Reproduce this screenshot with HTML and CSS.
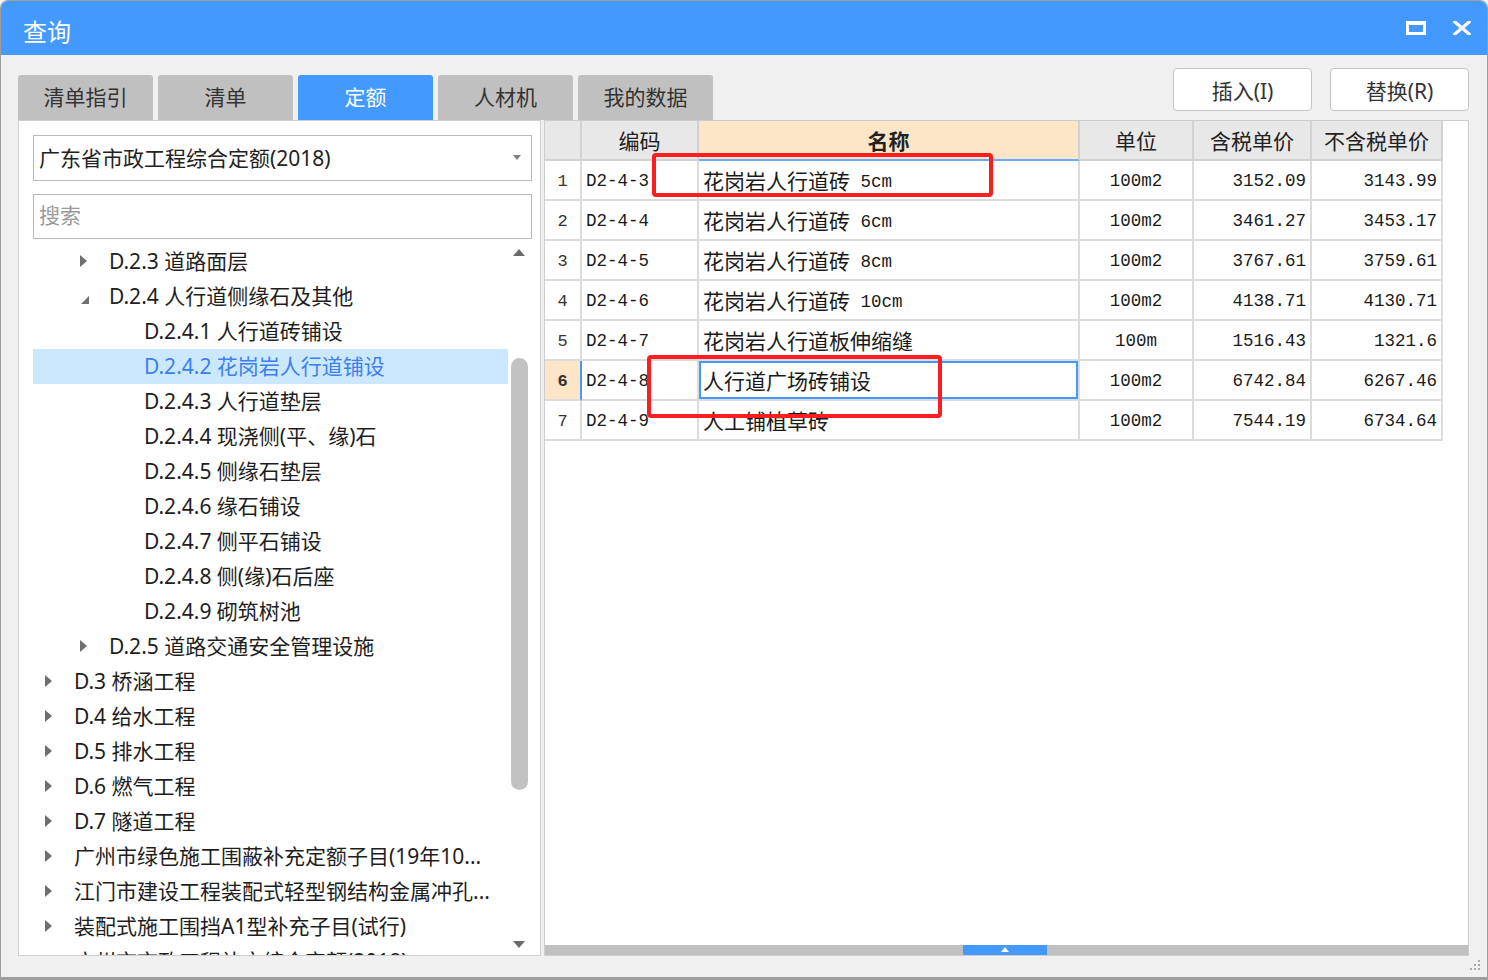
FILE: index.html
```html
<!DOCTYPE html>
<html lang="zh-CN">
<head>
<meta charset="utf-8">
<title>查询</title>
<link rel="stylesheet" href="styles.css">
</head>
<body>
<div class="window">
  <header class="titlebar">
    <span class="title">查询</span>
    <div class="winctrls">
      <svg class="ic" width="20" height="14" viewBox="0 0 20 14"><rect x="1.5" y="2" width="17" height="10.5" fill="none" stroke="#fff" stroke-width="3"/><rect x="0" y="0" width="20" height="4" fill="#fff"/></svg>
      <svg class="ic" width="18" height="14" viewBox="0 0 18 14"><path d="M2 1 L16 13 M16 1 L2 13" stroke="#fff" stroke-width="3.2" stroke-linecap="square" fill="none"/></svg>
    </div>
  </header>
  <main class="content">
    <div class="toprow">
      <nav class="tabs">
        <div class="tab">清单指引</div>
        <div class="tab">清单</div>
        <div class="tab active">定额</div>
        <div class="tab">人材机</div>
        <div class="tab">我的数据</div>
      </nav>
      <div class="actions">
        <button class="btn">插入(I)</button>
        <button class="btn">替换(R)</button>
      </div>
    </div>
    <div class="panes">
      <section class="left">
        <div class="select"><span>广东省市政工程综合定额(2018)</span><i class="caret"></i></div>
        <div class="search">搜索</div>
        <div class="treewrap">
          <ul class="tree">
            <li class="node l2"><span class="arr closed"></span><span>D.2.3 道路面层</span></li>
            <li class="node l2"><span class="arr open"></span><span>D.2.4 人行道侧缘石及其他</span></li>
            <li class="node l3"><span class="arr"></span><span>D.2.4.1 人行道砖铺设</span></li>
            <li class="node l3 sel"><span class="arr"></span><span>D.2.4.2 花岗岩人行道铺设</span></li>
            <li class="node l3"><span class="arr"></span><span>D.2.4.3 人行道垫层</span></li>
            <li class="node l3"><span class="arr"></span><span>D.2.4.4 现浇侧(平、缘)石</span></li>
            <li class="node l3"><span class="arr"></span><span>D.2.4.5 侧缘石垫层</span></li>
            <li class="node l3"><span class="arr"></span><span>D.2.4.6 缘石铺设</span></li>
            <li class="node l3"><span class="arr"></span><span>D.2.4.7 侧平石铺设</span></li>
            <li class="node l3"><span class="arr"></span><span>D.2.4.8 侧(缘)石后座</span></li>
            <li class="node l3"><span class="arr"></span><span>D.2.4.9 砌筑树池</span></li>
            <li class="node l2"><span class="arr closed"></span><span>D.2.5 道路交通安全管理设施</span></li>
            <li class="node l1"><span class="arr closed"></span><span>D.3 桥涵工程</span></li>
            <li class="node l1"><span class="arr closed"></span><span>D.4 给水工程</span></li>
            <li class="node l1"><span class="arr closed"></span><span>D.5 排水工程</span></li>
            <li class="node l1"><span class="arr closed"></span><span>D.6 燃气工程</span></li>
            <li class="node l1"><span class="arr closed"></span><span>D.7 隧道工程</span></li>
            <li class="node l1"><span class="arr closed"></span><span>广州市绿色施工围蔽补充定额子目(19年10...</span></li>
            <li class="node l1"><span class="arr closed"></span><span>江门市建设工程装配式轻型钢结构金属冲孔...</span></li>
            <li class="node l1"><span class="arr closed"></span><span>装配式施工围挡A1型补充子目(试行)</span></li>
            <li class="node l1"><span class="arr closed"></span><span>广州市市政工程补充综合定额(2018)</span></li>
          </ul>
          <div class="vscroll">
            <span class="sarrow up"></span>
            <span class="thumb"></span>
            <span class="sarrow down"></span>
          </div>
        </div>
      </section>
      <section class="right">
        <div class="gridwrap">
          <table class="grid">
            <colgroup><col class="c0"><col class="c1"><col class="c2"><col class="c3"><col class="c4"><col class="c5"></colgroup>
            <thead>
              <tr><th></th><th>编码</th><th class="hsel">名称</th><th>单位</th><th>含税单价</th><th>不含税单价</th></tr>
            </thead>
            <tbody>
              <tr><td class="rn">1</td><td class="code">D2-4-3</td><td class="name">花岗岩人行道砖<span class="m"> 5cm</span></td><td class="unit">100m2</td><td class="num">3152.09</td><td class="num">3143.99</td></tr>
              <tr><td class="rn">2</td><td class="code">D2-4-4</td><td class="name">花岗岩人行道砖<span class="m"> 6cm</span></td><td class="unit">100m2</td><td class="num">3461.27</td><td class="num">3453.17</td></tr>
              <tr><td class="rn">3</td><td class="code">D2-4-5</td><td class="name">花岗岩人行道砖<span class="m"> 8cm</span></td><td class="unit">100m2</td><td class="num">3767.61</td><td class="num">3759.61</td></tr>
              <tr><td class="rn">4</td><td class="code">D2-4-6</td><td class="name">花岗岩人行道砖<span class="m"> 10cm</span></td><td class="unit">100m2</td><td class="num">4138.71</td><td class="num">4130.71</td></tr>
              <tr><td class="rn">5</td><td class="code">D2-4-7</td><td class="name">花岗岩人行道板伸缩缝</td><td class="unit">100m</td><td class="num">1516.43</td><td class="num">1321.6</td></tr>
              <tr><td class="rn cur">6</td><td class="code">D2-4-8</td><td class="name csel">人行道广场砖铺设</td><td class="unit">100m2</td><td class="num">6742.84</td><td class="num">6267.46</td></tr>
              <tr><td class="rn">7</td><td class="code">D2-4-9</td><td class="name">人工铺植草砖</td><td class="unit">100m2</td><td class="num">7544.19</td><td class="num">6734.64</td></tr>
            </tbody>
          </table>
          <div class="mark m1"></div>
          <div class="mark m2"></div>
        </div>
        <div class="hscroll"><span class="hthumb"></span></div>
      </section>
    </div>
  </main>
  <svg class="grip" width="14" height="14" viewBox="0 0 14 14" fill="#a8a8a8">
    <rect x="11" y="1" width="2" height="2"/>
    <rect x="7" y="5" width="2" height="2"/><rect x="11" y="5" width="2" height="2"/>
    <rect x="3" y="9" width="2" height="2"/><rect x="7" y="9" width="2" height="2"/><rect x="11" y="9" width="2" height="2"/>
  </svg>
</div>
</body>
</html>
```

FILE: styles.css
```css
* { box-sizing: border-box; margin: 0; padding: 0; }
html, body { background: #ffffff; }
body {
  margin: 0;
  font-family: "Noto Sans", "Noto Sans CJK SC", sans-serif;
  color: #222;
}
.window {
  position: relative;
  width: 1488px;
  height: 980px;
  border: 1px solid #9e9e9e;
  border-bottom-width: 3px;
  border-radius: 8px 8px 0 0;
  background: #f0f0f0;
  overflow: hidden;
  display: flex;
  flex-direction: column;
}
.titlebar {
  height: 54px;
  flex: none;
  background: #4499ff;
  display: flex;
  align-items: center;
  padding: 0 16px 0 22px;
}
.title {
  font-family: "Noto Sans CJK SC", sans-serif;
  font-size: 24px;
  line-height: 24px;
  padding-top: 6px;
  color: #fff;
}
.winctrls {
  margin-left: auto;
  display: flex;
  align-items: center;
  gap: 27px;
}
.ic { display: block; }

.content {
  flex: 1;
  display: flex;
  flex-direction: column;
  padding: 0 18px 0 17px;
}
.toprow {
  height: 65px;
  flex: none;
  display: flex;
}
.tabs {
  display: flex;
  gap: 5px;
  margin-top: 20px;
}
.tab {
  width: 135px;
  height: 45px;
  background: #c0c0c0;
  border-radius: 3px 3px 0 0;
  font-size: 21px;
  line-height: 44px;
  text-align: center;
  color: #333;
}
.tab.active { background: #4499ff; color: #fff; }
.actions {
  margin-left: auto;
  margin-top: 13px;
  display: flex;
  gap: 18px;
  align-items: flex-start;
}
.btn {
  width: 139px;
  height: 43px;
  background: #fff;
  border: 1px solid #c4c4c4;
  border-radius: 4px;
  font-family: "Noto Sans", "Noto Sans CJK SC", sans-serif;
  font-size: 21px;
  color: #333;
}

.panes {
  height: 836px;
  flex: none;
  display: flex;
  gap: 3px;
}
.left {
  width: 523px;
  flex: none;
  background: #fff;
  border: 1px solid #d0d0d0;
  padding: 14px 8px 0 14px;
  display: flex;
  flex-direction: column;
}
.select {
  height: 46px;
  flex: none;
  border: 1px solid #b9b9b9;
  display: flex;
  align-items: center;
  padding: 0 10px 2px 5px;
  font-size: 21px;
  color: #222;
}
.caret {
  margin-left: auto;
  width: 0;
  height: 0;
  border-left: 4px solid transparent;
  border-right: 4px solid transparent;
  border-top: 5px solid #808080;
}
.search {
  height: 45px;
  flex: none;
  margin-top: 13px;
  border: 1px solid #b9b9b9;
  padding-left: 5px;
  font-size: 21px;
  line-height: 41px;
  color: #9a9a9a;
}
.treewrap {
  margin-top: 5px;
  flex: 1;
  min-height: 0;
  display: flex;
  overflow: hidden;
}
.tree {
  flex: 1;
  list-style: none;
  overflow: hidden;
}
.node {
  height: 35px;
  display: flex;
  align-items: center;
  padding-bottom: 4px;
  font-size: 21px;
  white-space: nowrap;
  color: #1e1e1e;
}
.node.l2 { padding-left: 35px; }
.node.l3 { padding-left: 70px; }
.node.sel { background: #cce8ff; color: #3b80ec; }
.arr {
  position: relative;
  width: 41px;
  height: 31px;
  flex: none;
  align-self: flex-start;
}
.arr.closed::before {
  content: "";
  position: absolute;
  left: 12px;
  top: 11px;
  border-left: 7px solid #6e6e6e;
  border-top: 6px solid transparent;
  border-bottom: 6px solid transparent;
}
.arr.open::before {
  content: "";
  position: absolute;
  left: 13px;
  top: 17px;
  border-left: 8px solid transparent;
  border-bottom: 8px solid #707070;
}
.vscroll {
  width: 22px;
  flex: none;
  margin-right: 2px;
  display: flex;
  flex-direction: column;
  align-items: center;
}
.sarrow {
  flex: none;
  width: 0;
  height: 0;
  border-left: 6px solid transparent;
  border-right: 6px solid transparent;
}
.sarrow.up { margin-top: 5px; border-bottom: 7px solid #6a6a6a; }
.sarrow.down { margin-top: auto; margin-bottom: 7px; border-top: 7px solid #6a6a6a; }
.thumb {
  flex: none;
  width: 17px;
  height: 432px;
  margin-top: 102px;
  background: #c2c2c2;
  border-radius: 9px;
}

.right {
  flex: 1;
  background: #fff;
  border: 1px solid #cdcdcd;
  display: flex;
  flex-direction: column;
}
.gridwrap {
  position: relative;
  flex: 1;
  min-height: 0;
}
.grid {
  width: 898px;
  table-layout: fixed;
  border-collapse: separate;
  border-spacing: 0;
}
.c0 { width: 37px; }
.c1 { width: 117px; }
.c2 { width: 381px; }
.c3 { width: 114px; }
.c4 { width: 118px; }
.c5 { width: 131px; }
.grid th, .grid td {
  border-right: 2px solid #dcdcdc;
  border-bottom: 2px solid #dcdcdc;
  white-space: nowrap;
  overflow: hidden;
}
.grid th {
  height: 40px;
  background: #e8e8e8;
  font-family: "Noto Sans CJK SC", sans-serif;
  font-size: 21px;
  font-weight: normal;
  color: #222;
  text-align: center;
  border-color: #d2d2d2;
}
.grid th.hsel {
  background: #fde5c8;
  font-weight: bold;
  border-bottom-color: #6aacfb;
}
.grid td {
  height: 40px;
  padding-top: 2px;
  font-family: "Liberation Mono", "Noto Sans CJK SC", monospace;
  font-size: 17.5px;
  color: #1a1a1a;
}
.grid td.rn { text-align: center; color: #333; font-size: 17px; }
.grid td.rn.cur {
  background: #fde5c8;
  font-weight: bold;
  border-right-color: #4499ff;
}
.grid td.code { padding-left: 4px; }
.grid td.name {
  padding-top: 0;
  padding-left: 4px;
  font-family: "Noto Sans CJK SC", sans-serif;
  font-size: 21px;
}
.grid td.name .m {
  font-family: "Liberation Mono", monospace;
  font-size: 17.5px;
  vertical-align: 2px;
}
.grid td.csel { box-shadow: inset 0 0 0 2px #4499ff; }
.grid td.unit { text-align: center; }
.grid td.num { text-align: right; padding-right: 4px; }

.mark {
  position: absolute;
  border: 4px solid #fa1e1e;
  border-radius: 4px;
}
.m1 { left: 107px; top: 32px; width: 341px; height: 44px; }
.m2 { left: 102px; top: 234px; width: 295px; height: 63px; }

.hscroll {
  flex: none;
  height: 10px;
  background: #c0c0c0;
  display: flex;
}
.hthumb {
  position: relative;
  margin-left: 418px;
  width: 84px;
  height: 10px;
  background: #4499ff;
}
.hthumb::after {
  content: "";
  position: absolute;
  left: 38px;
  top: 2px;
  border-left: 4px solid transparent;
  border-right: 4px solid transparent;
  border-bottom: 5px solid #fff;
}
.grip {
  position: absolute;
  right: 6px;
  bottom: 4px;
}
```
